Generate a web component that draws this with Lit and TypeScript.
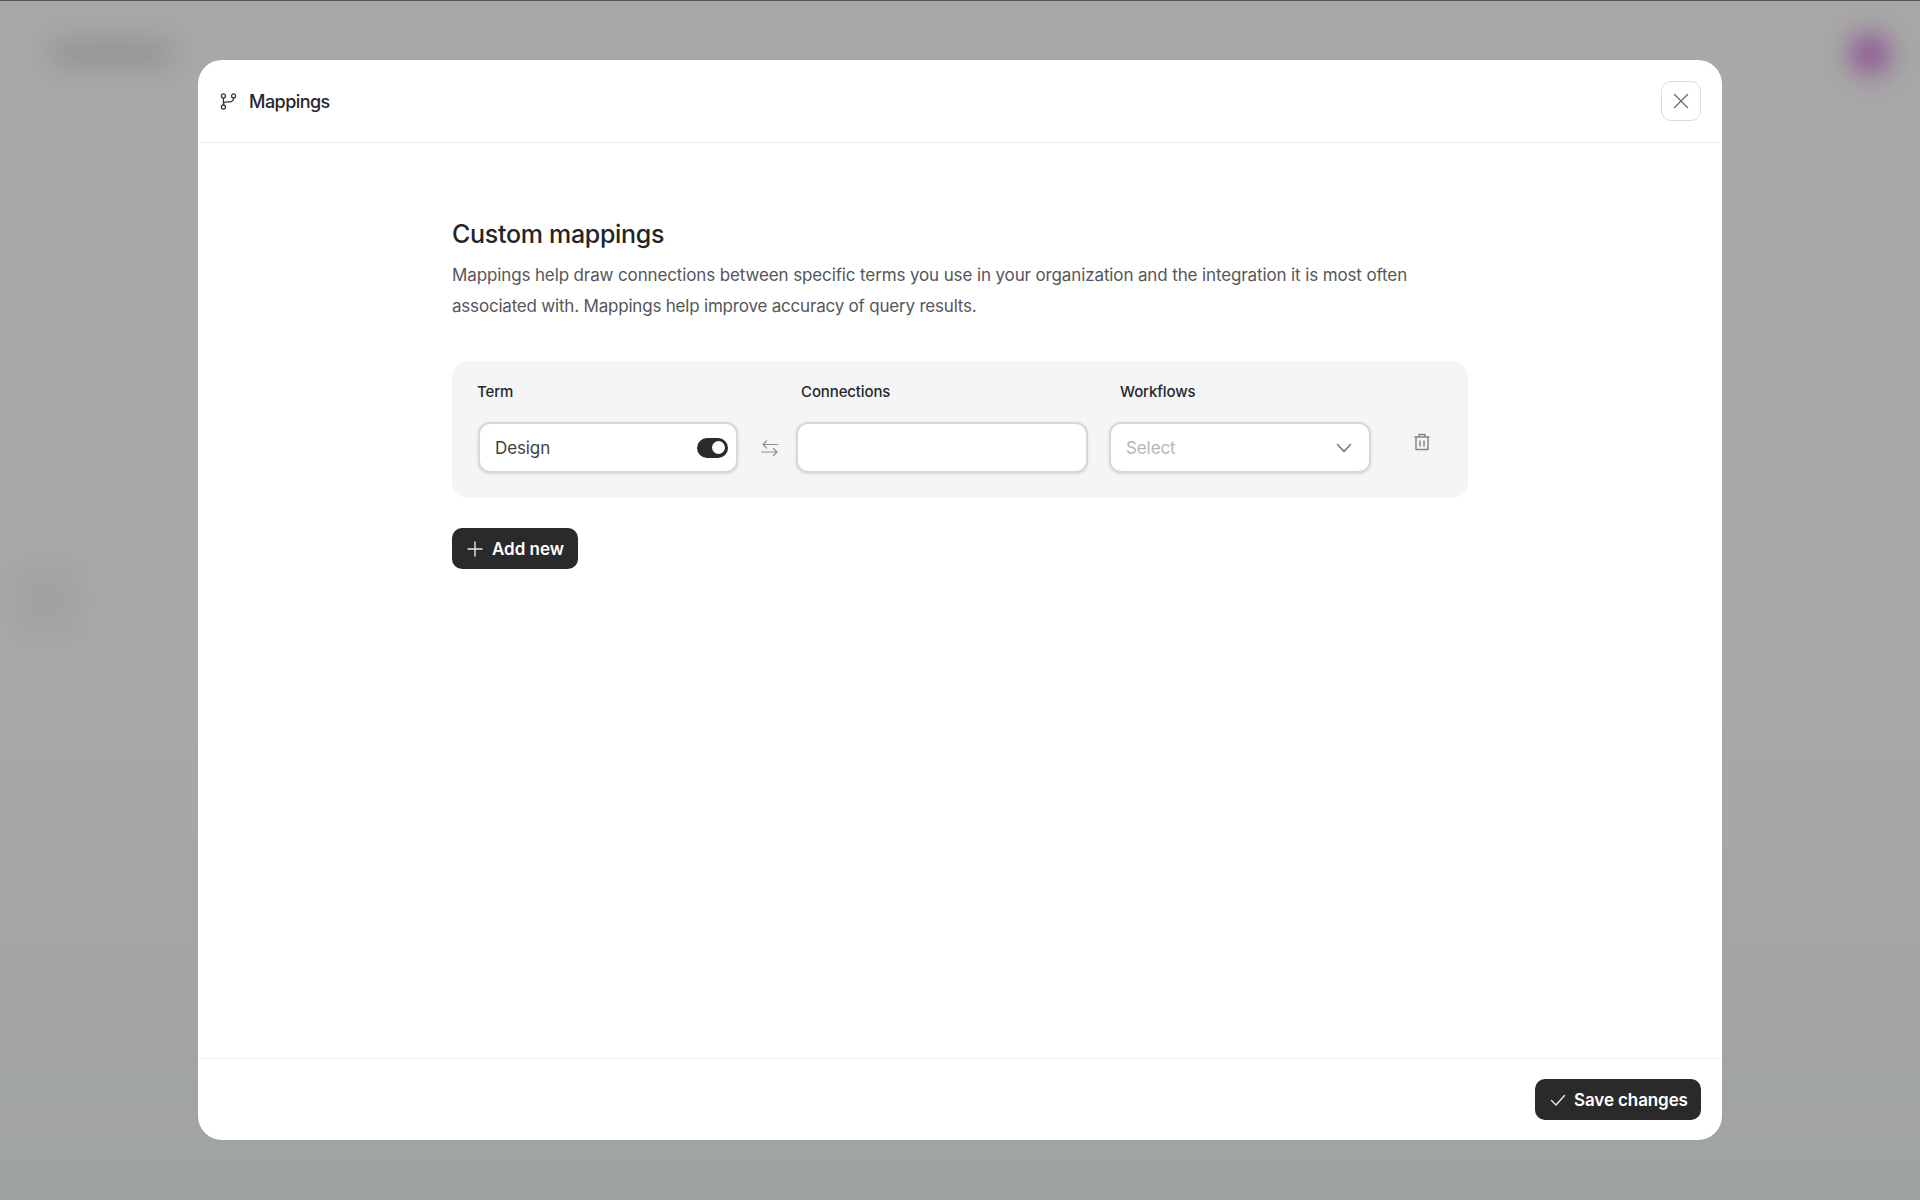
import { LitElement, html, css } from "lit";
import { customElement } from "lit/decorators.js";

@customElement("app-root")
export class AppRoot extends LitElement {
  static styles = css`
    :host {
      display: block;
      position: relative;
      width: 1920px;
      height: 1200px;
      overflow: hidden;
      font-family: Inter, "Liberation Sans", sans-serif;
      color: #26272a;
      background: linear-gradient(180deg, #a8a8a8 0%, #a8a8a8 55%, #a0a3a3 100%);
    }
    .topline { position: absolute; left: 0; right: 0; top: 0; height: 1px; background: #555; }
    .blur { position: absolute; }
    .b-logo { left: 50px; top: 43px; width: 122px; height: 20px; border-radius: 10px; background: #8c8c8c; filter: blur(14px); }
    .b-avatar { left: 1849px; top: 33px; width: 42px; height: 42px; border-radius: 50%; background: #8d5a92; filter: blur(13px); }
    .b-side { left: 14px; top: 568px; width: 64px; height: 64px; border-radius: 14px; background: #a2a2a2; filter: blur(10px); }
    .modal {
      position: absolute;
      left: 198px;
      top: 60px;
      width: 1524px;
      height: 1080px;
      display: flex;
      flex-direction: column;
      background: #fff;
      border-radius: 24px;
      overflow: hidden;
    }
    .head {
      height: 82px;
      flex: none;
      display: flex;
      align-items: center;
      padding: 0 21px 0 22px;
      border-bottom: 1px solid #eceded;
    }
    .head svg.map { width: 17px; height: 17px; margin-right: 12px; color: #3a3b3e; }
    .head .title { font-size: 18px; font-weight: 500; letter-spacing: -0.55px; color: #26272a; }
    .close {
      margin-left: auto;
      width: 40px;
      height: 40px;
      box-sizing: border-box;
      border: 1px solid #d9dbe1;
      border-radius: 10px;
      display: flex;
      align-items: center;
      justify-content: center;
      color: #6d6e72;
    }
    .close svg { width: 18px; height: 18px; }
    .body { flex: 1; padding: 74px 254px 0; }
    h1 { margin: 0; font-size: 25px; line-height: 34px; font-weight: 500; color: #242528; letter-spacing: -0.3px; }
    .desc { margin: 9px 0 0; font-size: 17px; line-height: 30.5px; color: #55565a; letter-spacing: -0.125px; width: 1000px; }
    .desc span { letter-spacing: -0.2px; }
    .panel {
      margin-top: 40px;
      height: 137px;
      box-sizing: border-box;
      background: #f3f5f6;
      border-radius: 16px;
      padding: 19px 0 0 25px;
    }
    .labels { display: flex; font-size: 15px; line-height: 24px; font-weight: 500; color: #26272a; letter-spacing: -0.12px; }
    .labels span:nth-child(1) { width: 324px; }
    .labels span:nth-child(2) { width: 319px; }
    .fields { display: flex; margin-top: 18px; align-items: flex-start; }
    .field {
      box-sizing: border-box;
      height: 51px;
      background: #fff;
      border: 2px solid #d6d8dc;
      border-radius: 12px;
      box-shadow: 0 1px 3px rgba(40, 44, 52, 0.14);
      display: flex;
      align-items: center;
      font-size: 17px;
      letter-spacing: -0.1px;
    }
    .term { width: 260px; margin-left: 1px; padding: 0 8px 0 15px; color: #3e3f43; justify-content: space-between; }
    .toggle { width: 31px; height: 20px; box-sizing: border-box; padding: 0 3px; border-radius: 10px; background: #2a2a2b; display: flex; align-items: center; justify-content: flex-end; }
    .toggle i { width: 13px; height: 13px; border-radius: 50%; background: #fff; }
    .swap { width: 58px; height: 51px; flex: none; display: flex; align-items: center; justify-content: center; color: #8e8f93; }
    .swap svg { width: 20px; height: 20px; margin-left: 5px; }
    .conn { width: 292px; }
    .wf { width: 262px; margin-left: 21px; padding: 0 16px 0 15px; color: #b4b5b9; justify-content: space-between; }
    .wf svg { width: 18px; height: 18px; color: #6f7074; }
    .trash { margin: 10px 0 0 41px; color: #85868a; display: flex; }
    .trash svg { width: 20px; height: 20px; }
    .btn {
      display: inline-flex;
      box-sizing: border-box;
      height: 41px;
      align-items: center;
      background: #2a2a2b;
      color: #fff;
      border-radius: 10px;
      font-size: 17px;
      font-weight: 600;
    }
    .add { margin-top: 30px; width: 126px; padding-left: 14px; gap: 8px; letter-spacing: 0; }
    .add svg { width: 18px; height: 18px; color: #e8e8e8; }
    .foot {
      height: 82px;
      flex: none;
      box-sizing: border-box;
      border-top: 1px solid #ecedee;
      display: flex;
      justify-content: flex-end;
      align-items: center;
      padding: 0 21px 0 0;
    }
    .save { width: 166px; padding-left: 14px; gap: 7px; letter-spacing: -0.1px; }
    .save svg { width: 18px; height: 18px; color: #e8e8e8; }
  `;

  render() {
    return html`
      <div class="topline"></div>
      <div class="blur b-logo"></div>
      <div class="blur b-avatar"></div>
      <div class="blur b-side"></div>
      <div class="modal">
        <div class="head">
          <svg class="map" viewBox="0 0 16 16" fill="none" stroke="currentColor" stroke-width="1.2">
            <circle cx="3.2" cy="2.8" r="1.9"></circle>
            <circle cx="3.2" cy="13.2" r="1.9"></circle>
            <circle cx="12.8" cy="2.8" r="1.9"></circle>
            <path d="M3.2 4.7v6.6M12.8 4.7c0 2.6-1.6 3.6-4 3.6H6.4c-1.8 0-3.2 1-3.2 2.6"></path>
          </svg>
          <span class="title">Mappings</span>
          <div class="close">
            <svg viewBox="0 0 18 18" fill="none" stroke="currentColor" stroke-width="1.4" stroke-linecap="round">
              <path d="M2.5 2.5l13 13M15.5 2.5l-13 13"></path>
            </svg>
          </div>
        </div>
        <div class="body">
          <h1>Custom mappings</h1>
          <p class="desc">Mappings help draw connections between specific terms you use in your organization and the integration it is most often <span>associated with. Mappings help improve accuracy of query results.</span></p>
          <div class="panel">
            <div class="labels"><span>Term</span><span>Connections</span><span>Workflows</span></div>
            <div class="fields">
              <div class="field term">Design<div class="toggle"><i></i></div></div>
              <div class="swap">
                <svg viewBox="0 0 20 20" fill="none" stroke="currentColor" stroke-width="1.2" stroke-linecap="round" stroke-linejoin="round">
                  <path d="M18 6.5H3M6.5 3L3 6.5 6.5 10M2 14h15M13.5 10.5L17 14l-3.5 3.5"></path>
                </svg>
              </div>
              <div class="field conn"></div>
              <div class="field wf">Select
                <svg viewBox="0 0 18 18" fill="none" stroke="currentColor" stroke-width="1.4" stroke-linecap="round" stroke-linejoin="round">
                  <path d="M2.5 5.5L9 12.5l6.5-7"></path>
                </svg>
              </div>
              <div class="trash">
                <svg viewBox="0 0 20 20" fill="none" stroke="currentColor" stroke-width="1.5" stroke-linejoin="round">
                  <path d="M2.5 5h15M7 5V2.5h6V5M4 5v12.5h12V5M8 8.5v6M12 8.5v6"></path>
                </svg>
              </div>
            </div>
          </div>
          <div class="btn add">
            <svg viewBox="0 0 18 18" fill="none" stroke="currentColor" stroke-width="1.4" stroke-linecap="round"><path d="M9 2v14M2 9h14"></path></svg>
            Add new
          </div>
        </div>
        <div class="foot">
          <div class="btn save">
            <svg viewBox="0 0 18 18" fill="none" stroke="currentColor" stroke-width="1.4" stroke-linecap="round" stroke-linejoin="round"><path d="M2.5 9.5L7 14l8.5-9.5"></path></svg>
            Save changes
          </div>
        </div>
      </div>
    `;
  }
}
